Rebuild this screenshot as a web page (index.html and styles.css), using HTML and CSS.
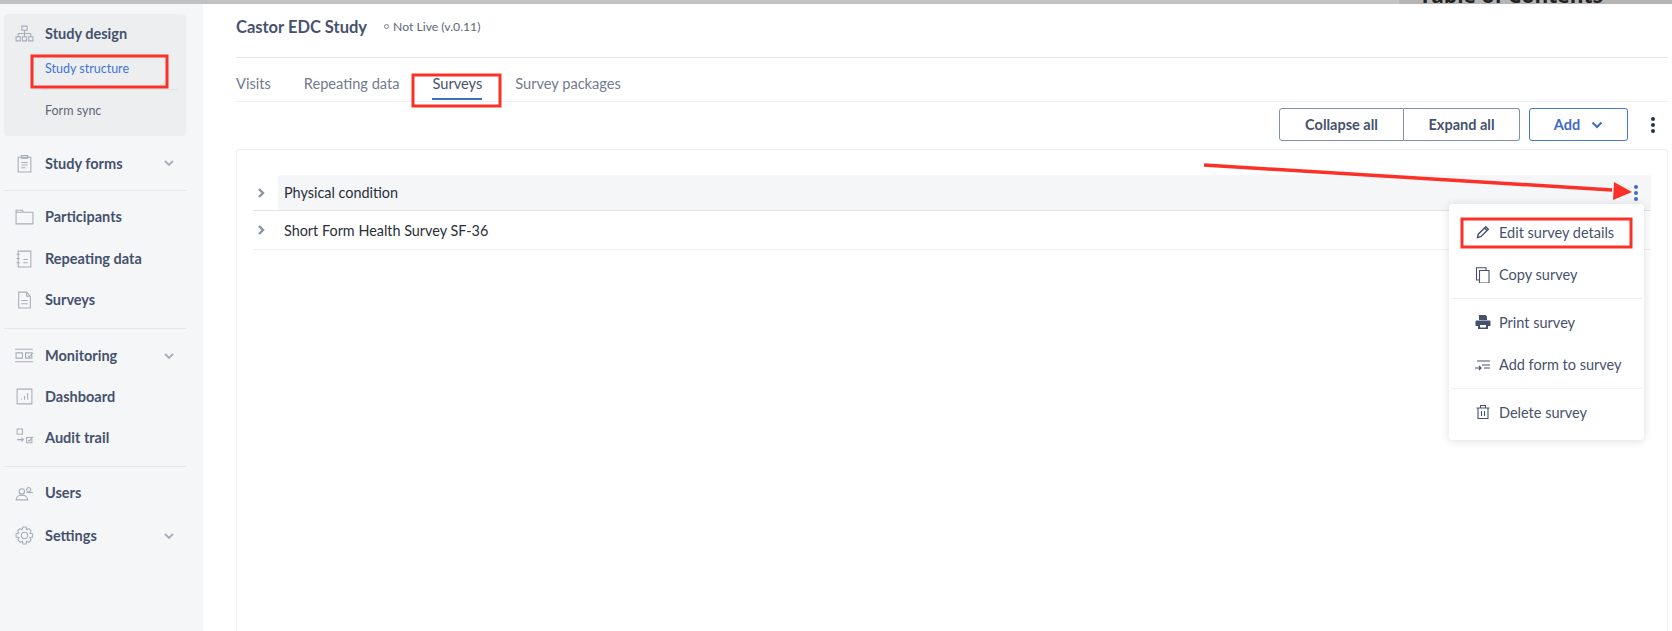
FILE: index.html
```html
<!DOCTYPE html>
<html lang="en">
<head>
    <meta charset="UTF-8">
    <title>Castor EDC Study - Surveys</title>
    <link rel="stylesheet" href="styles.css">
</head>
<body>
    <div class="topstrip">
        <div class="toc-strip"><span class="toc-title">Table of Contents</span></div>
    </div>
    <div class="app">
        <!-- Sidebar -->
        <nav class="sidebar">
            <div class="nav-panel">
                <div class="nav-item">
                    <svg class="nav-icon" viewBox="0 0 18 18"><path d="M6.500 2h5v4h-5zM9 6v3M3 9h12M3 9v3M9 9v3M15 9v3M1 12h4v4H1zM7 12h4v4H7zM13 12h4v4h-4z"/></svg>
                    <span>Study design</span>
                </div>
                <a class="sub-item sub-active">Study structure</a>
                <div class="sub-line"></div>
                <a class="sub-item sub-plain">Form sync</a>
            </div>
            <div class="nav-item nav-forms">
                <svg class="nav-icon" viewBox="0 0 18 18"><path d="M3 3h12v14H3zM6 1.500h6v2.500H6zM6 8h6M6 10.500h6M6 13h4"/></svg>
                <span>Study forms</span>
                <svg class="chev" viewBox="0 0 12 12"><path d="M2 4l4 4 4-4"/></svg>
            </div>
            <div class="nav-sep"></div>
            <div class="nav-group nav-group-main">
                <div class="nav-item">
                    <svg class="nav-icon" viewBox="0 0 18 18"><path d="M1 3h6l1 2h9v11H1zM1 5h7"/></svg>
                    <span>Participants</span>
                </div>
                <div class="nav-item">
                    <svg class="nav-icon" viewBox="0 0 18 18"><path d="M3 2h12v15H3zM1.500 5h3M1.500 9h3M1.500 13h3M8 10h4M8 13h4"/></svg>
                    <span>Repeating data</span>
                </div>
                <div class="nav-item">
                    <svg class="nav-icon" viewBox="0 0 18 18"><path d="M3.500 2H11l3.500 4v11h-11zM11 2v4h3.500M6 10h6M6 13h6"/></svg>
                    <span>Surveys</span>
                </div>
            </div>
            <div class="nav-sep"></div>
            <div class="nav-group nav-group-monitor">
                <div class="nav-item">
                    <svg class="nav-icon" viewBox="0 0 18 18"><path d="M0 3h17M0 15h17M1 6.500h6v5H1zM10 6.500h6v5h-6zM12 9l1.500 1.500L17 6.500"/></svg>
                    <span>Monitoring</span>
                    <svg class="chev" viewBox="0 0 12 12"><path d="M2 4l4 4 4-4"/></svg>
                </div>
                <div class="nav-item">
                    <svg class="nav-icon" viewBox="0 0 18 18"><path d="M2 2h14v14H2zM6 12v-1M9 12V8.500M12 12V6"/></svg>
                    <span>Dashboard</span>
                </div>
                <div class="nav-item">
                    <svg class="nav-icon" viewBox="0 0 18 18"><path d="M2 1h5v5H2zM2 11h6M6 9l2 2-2 2M11 9h5v5h-5zM12.500 11.500l1 1L17 8.500"/></svg>
                    <span>Audit trail</span>
                </div>
            </div>
            <div class="nav-sep"></div>
            <div class="nav-group nav-group-admin">
                <div class="nav-item">
                    <svg class="nav-icon" viewBox="0 0 18 18"><circle cx="6.500" cy="8" r="2.500"/><path d="M1 16c0-6 11-6 11 0zM11.500 5a2 2 0 1 0 3 0 2 2 0 0 0-3 0M11 9h6"/></svg>
                    <span>Users</span>
                </div>
                <div class="nav-item nav-settings">
                    <svg class="nav-icon" viewBox="0 0 18 18"><circle cx="9" cy="9" r="3"/><path d="M7.500 1h3l.5 2.500 2-1 2.200 2.200-1 2 2.500.8v3l-2.500.5 1 2.200-2.200 2.200-2-1-.5 2.600h-3l-.5-2.600-2 1-2.200-2.200 1-2.200L1 10.500v-3l2.500-.8-1-2L4.700 2.500l2 1z"/></svg>
                    <span>Settings</span>
                    <svg class="chev" viewBox="0 0 12 12"><path d="M2 4l4 4 4-4"/></svg>
                </div>
            </div>
        </nav>

        <!-- Main content -->
        <main class="content">
            <header class="study-head">
                <h1>Castor EDC Study</h1>
                <span class="study-status"><i class="status-dot"></i>Not Live (v.0.11)</span>
            </header>
            <div class="tabs">
                <a class="tab">Visits</a>
                <a class="tab">Repeating data</a>
                <a class="tab tab-active">Surveys</a>
                <a class="tab">Survey packages</a>
            </div>
            <div class="toolbar">
                <div class="btn-group">
                    <button class="btn btn-collapse">Collapse all</button>
                    <button class="btn btn-expand">Expand all</button>
                </div>
                <button class="btn-add">Add
                    <svg viewBox="0 0 12 12"><path d="M1.500 3.500L6 8l4.500-4.500"/></svg>
                </button>
                <div class="dots dots-dark"><i></i><i></i><i></i></div>
            </div>
            <section class="card">
                <div class="row row-first">
                    <svg class="row-arrow" viewBox="0 0 10 12"><path d="M3 2l4 4-4 4"/></svg>
                    <div class="row-label row-hover">
                        <span>Physical condition</span>
                        <div class="dots dots-blue"><i></i><i></i><i></i></div>
                    </div>
                </div>
                <div class="row">
                    <svg class="row-arrow" viewBox="0 0 10 12"><path d="M3 2l4 4-4 4"/></svg>
                    <div class="row-label"><span>Short Form Health Survey SF-36</span></div>
                </div>
            </section>
        </main>
    </div>

    <!-- Row menu -->
    <div class="menu">
        <div class="menu-item">
            <svg class="menu-icon menu-icon-pen" viewBox="0 0 16 16"><path d="M2.500 13.500l.8-3.300 7.500-7.500 2.500 2.500-7.500 7.500zM9.500 4l2.500 2.500"/></svg>
            Edit survey details
        </div>
        <div class="menu-item">
            <svg class="menu-icon" viewBox="0 0 16 16"><path d="M4.500 3.500h9.500V16H4.500zM4.500 13H1.500V.8h9.500v2.700"/></svg>
            Copy survey
        </div>
        <div class="menu-sep"></div>
        <div class="menu-item">
            <svg class="menu-icon menu-icon-fill" viewBox="0 0 16 16"><path d="M4 1h6.500L12 2.500V6H4zM1.500 6.500h13a1 1 0 0 1 1 1V12H13v3H3v-3H.5V7.500a1 1 0 0 1 1-1z"/><path class="print-cut" d="M4.500 10.500h7v3.500h-7z"/></svg>
            Print survey
        </div>
        <div class="menu-item">
            <svg class="menu-icon" viewBox="0 0 16 16"><path d="M2 4h13M7 8h8M0 11h6M4 9l2 2-2 2M9 11h6"/></svg>
            Add form to survey
        </div>
        <div class="menu-sep"></div>
        <div class="menu-item">
            <svg class="menu-icon" viewBox="0 0 16 16"><path d="M1.500 4h13M5.500 4V1.500h5V4M3 4v10.500h10V4M6.500 7v5M9.500 7v5"/></svg>
            Delete survey
        </div>
    </div>

    <!-- Red annotations drawn over the screenshot -->
    <svg class="notes" viewBox="0 0 1672 631">
        <rect x="32" y="56" width="135" height="31"/>
        <rect x="413" y="75" width="87" height="31"/>
        <rect x="1462" y="219" width="169" height="28"/>
        <path class="arrow-line" d="M1204 165L1612 190"/>
        <path class="arrow-head" d="M1614 182L1632 192L1613 200z"/>
    </svg>
</body>
</html>
```

FILE: styles.css
```css
* {
    box-sizing: border-box;
}

html, body {
    margin: 0;
    height: 631px;
    overflow: hidden;
}

body {
    background: #fff;
    font-family: "Lato", "Open Sans", sans-serif;
    color: #46526d;
    position: relative;
}

.topstrip {
    height: 4px;
    background: #c2c2c2;
    display: flex;
    justify-content: flex-end;
    overflow: hidden;
}

.toc-strip {
    width: 273px;
    background: #b5b5b5;
    position: relative;
}

.toc-title {
    position: absolute;
    left: 20px;
    top: -19px;
    font-size: 21px;
    font-weight: 700;
    color: #222;
    font-family: "Open Sans", sans-serif;
    white-space: nowrap;
}

.app {
    display: flex;
    height: 627px;
}

/* Sidebar */
.sidebar {
    width: 203px;
    flex: none;
    background: #f5f6f8;
    padding: 10px 17px 0 4px;
}

.nav-panel {
    background: #edeef0;
    border-radius: 4px;
    height: 122px;
    margin-bottom: 6px;
}

.nav-item {
    display: flex;
    align-items: center;
    height: 41px;
    padding-left: 11px;
    font-size: 14.500px;
    font-weight: 700;
    color: #46526d;
}

.nav-panel .nav-item {
    height: 38px;
}

.nav-icon {
    width: 19px;
    height: 19px;
    flex: none;
    margin-right: 11px;
    fill: none;
    stroke: #a6adba;
    stroke-width: 1;
}

.nav-forms {
    height: 42px;
    margin-bottom: 6px;
}

.chev {
    width: 12px;
    height: 12px;
    margin-left: auto;
    margin-right: 11px;
    fill: none;
    stroke: #a6adba;
    stroke-width: 1.800;
}

.sub-item {
    display: block;
    padding-left: 41px;
    font-size: 12.500px;
    line-height: 17px;
}

.sub-active {
    color: #3f74d8;
    height: 37px;
    padding-top: 8px;
}

.sub-line {
    height: 1px;
    background: #e0e2e6;
    margin: 0 8px 0 37px;
}

.sub-plain {
    color: #5d6679;
    height: 33px;
    padding-top: 12px;
}

.nav-sep {
    height: 1px;
    background: #e4e6ea;
}

.nav-group-main {
    padding: 5px 0 7.500px;
}

.nav-group-main .nav-item {
    height: 41.500px;
}

.nav-group-monitor {
    padding: 6px 0 8px;
}

.nav-group-admin {
    padding: 5px 0 0;
}

.nav-settings {
    height: 43px;
    margin-top: 1px;
}

/* Main content */
.content {
    flex: 1;
    min-width: 0;
    padding: 0 4px 0 33px;
    display: flex;
    flex-direction: column;
}

.study-head {
    height: 54px;
    display: flex;
    align-items: center;
    padding-bottom: 8px;
    border-bottom: 1px solid #e4e6ea;
    flex: none;
}

.study-head h1 {
    margin: 0;
    font-size: 16.500px;
    font-weight: 700;
    color: #46526d;
}

.study-status {
    margin-left: 17px;
    font-size: 12.200px;
    color: #5d6679;
    display: flex;
    align-items: center;
}

.status-dot {
    width: 5px;
    height: 5px;
    border: 1px solid #7c8699;
    border-radius: 50%;
    margin-right: 4px;
}

.tabs {
    height: 44px;
    display: flex;
    border-bottom: 1px solid #eff0f2;
    flex: none;
}

.tab {
    font-size: 14.600px;
    color: #727b8e;
    padding-top: 17px;
    margin-right: 33px;
    height: 43px;
}

.tab-active {
    color: #46526d;
    border-bottom: 2px solid #3f6bc4;
    height: 42px;
}

.toolbar {
    height: 47px;
    display: flex;
    align-items: flex-start;
    justify-content: flex-end;
    padding-top: 6px;
    flex: none;
}

.btn-group {
    display: flex;
    margin-right: 9px;
}

.btn {
    height: 33px;
    background: #fff;
    border: 1px solid #7f8fac;
    font-family: inherit;
    font-size: 14.500px;
    font-weight: 700;
    color: #46526d;
}

.btn-collapse {
    width: 125px;
    border-radius: 3px 0 0 3px;
}

.btn-expand {
    width: 116px;
    border-left: none;
    border-radius: 0 3px 3px 0;
}

.btn-add {
    width: 99px;
    height: 33px;
    background: #fff;
    border: 1px solid #4477cf;
    border-radius: 3px;
    font-family: inherit;
    font-size: 14.500px;
    font-weight: 700;
    color: #3f6bc4;
    display: flex;
    align-items: center;
    justify-content: center;
    gap: 11px;
}

.btn-add svg {
    width: 12px;
    height: 12px;
    fill: none;
    stroke: #3f6bc4;
    stroke-width: 2;
}

.dots {
    display: flex;
    flex-direction: column;
    gap: 2px;
}

.dots i {
    width: 4px;
    height: 4px;
    border-radius: 50%;
    background: currentColor;
}

.dots-dark {
    color: #26324a;
    margin: 9px 13px 0 23px;
}

.dots-blue {
    color: #3f6bc4;
    margin-left: auto;
    margin-right: 13px;
}

.card {
    flex: 1;
    border: 1px solid #eceef1;
    border-bottom: none;
    border-radius: 4px 4px 0 0;
    padding: 25px 16px 0 16px;
}

.row {
    display: flex;
    align-items: center;
    height: 39px;
    border-bottom: 1px solid #eff0f2;
}

.row-first {
    height: 36px;
    border-bottom: 1px solid #dfe1e5;
}

.row-arrow {
    width: 10px;
    height: 12px;
    margin-left: 3px;
    margin-right: 12px;
    flex: none;
    fill: none;
    stroke: #8a94a8;
    stroke-width: 2.400;
}

.row-label {
    flex: 1;
    height: 100%;
    display: flex;
    align-items: center;
    font-size: 14.400px;
    color: #2a2f3a;
    padding-left: 6px;
}

.row-hover {
    background: #f5f6f8;
    border-radius: 3px;
    height: 35px;
}

/* Row menu */
.menu {
    position: absolute;
    left: 1449px;
    top: 204px;
    width: 195px;
    height: 236px;
    background: #fff;
    border-radius: 4px;
    box-shadow: 0 1px 8px rgba(40, 50, 70, 0.16);
    padding-top: 7px;
}

.menu-item {
    height: 42.500px;
    display: flex;
    align-items: center;
    padding-left: 26px;
    font-size: 14.500px;
    color: #46526d;
}

.menu-icon {
    width: 16px;
    height: 16px;
    flex: none;
    margin-right: 8px;
    fill: none;
    stroke: #46526d;
    stroke-width: 1.100;
}

.menu-icon-pen {
    stroke-width: 1.400;
}

.menu-icon-fill {
    fill: #46526d;
    stroke: none;
}

.print-cut {
    fill: #fff;
    stroke: #46526d;
}

.menu-sep {
    height: 1px;
    margin: 2px;
    background: #eff0f3;
}

/* Annotations */
.notes {
    position: absolute;
    left: 0;
    top: 0;
    width: 1672px;
    height: 631px;
    pointer-events: none;
    fill: none;
    stroke: #fb3026;
    stroke-width: 3;
}

.notes .arrow-line {
    stroke-width: 3.500;
}

.notes .arrow-head {
    fill: #fb3026;
    stroke: none;
}
```
